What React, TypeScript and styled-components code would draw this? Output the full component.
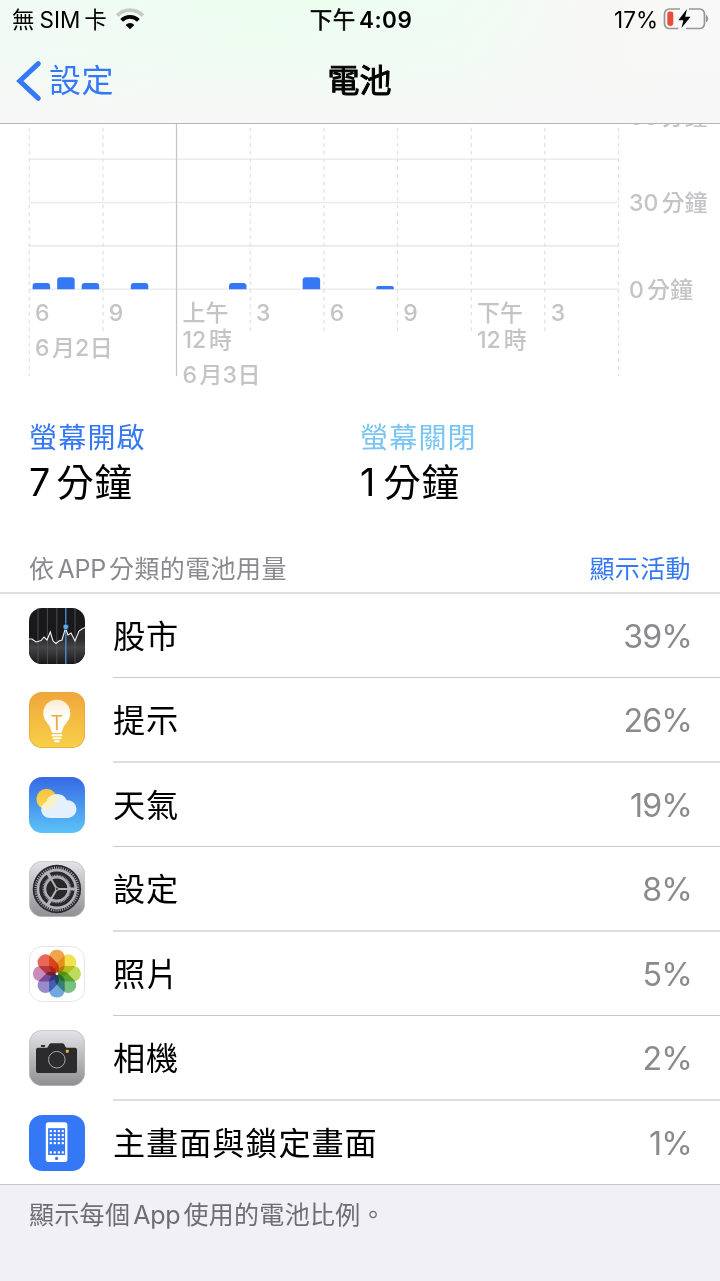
import type { ReactNode } from "react";
import styled, { createGlobalStyle } from "styled-components";

const GlobalStyle = createGlobalStyle`
    * {
        box-sizing: border-box;
    }

    body {
        margin: 0;
        background: #f1f0f6;
        color: #000;
        font-family: Inter, "Noto Sans CJK TC", sans-serif;
        text-autospace: no-autospace;
    }
`;

const Screen = styled.div`
    width: 720px;
    height: 1281px;
    overflow: hidden;
    display: flex;
    flex-direction: column;
`;

const Header = styled.header`
    flex: none;
    height: 124px;
    border-bottom: 1px solid #b4b5b5;
    background: linear-gradient(
            to bottom,
            rgba(247, 247, 247, 0) 0%,
            rgba(247, 247, 247, 0.3) 50%,
            #f7f7f7 100%
        ),
        linear-gradient(to right, #f1fbf4 0%, #edfef0 35%, #effdf2 62%, #f7f8f6 82%, #f8f8f8 100%);
`;

const StatusBar = styled.div`
    display: grid;
    grid-template-columns: 1fr auto 1fr;
    align-items: center;
    height: 40px;
    padding: 0 10px 0 12px;
    font-size: 22.5px;
    line-height: 40px;
`;

const StatusGroup = styled.div<{ $end?: boolean }>`
    display: flex;
    align-items: center;
    justify-content: ${(p) => (p.$end ? "flex-end" : "flex-start")};
    white-space: nowrap;

    svg {
        margin-left: ${(p) => (p.$end ? 0 : 8)}px;
        margin-bottom: 2px;
    }
`;

const Clock = styled.div`
    font-weight: 600;
    letter-spacing: 0.6px;
`;

const ClockPeriod = styled.span`
    font-weight: 400;
    -webkit-text-stroke: 0.5px #000;
`;

const NavBar = styled.nav`
    display: grid;
    grid-template-columns: 1fr auto 1fr;
    align-items: center;
    height: 81px;
    padding: 0 17px 0 16px;
    font-size: 32px;
    line-height: 81px;
`;

const BackLink = styled.a`
    display: flex;
    align-items: center;
    gap: 7px;
    color: #3478f6;
    letter-spacing: 0.4px;
`;

const Title = styled.h1`
    margin: 0;
    font-size: 32px;
    font-weight: 400;
    -webkit-text-stroke: 1px #000;
`;

const Main = styled.main`
    flex: none;
    background: #fff;
`;

const Chart = styled.svg`
    display: block;
    font-size: 23px;
    font-weight: 500;
`;

const Summary = styled.section`
    display: grid;
    grid-template-columns: 331px 1fr;
    padding: 18px 29px 0;
    height: 144px;
`;

const SummaryLabel = styled.div<{ $color: string }>`
    color: ${(p) => p.$color};
    font-size: 28px;
    line-height: 40px;
    letter-spacing: 1.2px;
`;

const SummaryValue = styled.div`
    font-size: 37.5px;
    line-height: 49px;
    letter-spacing: 0.8px;
`;

const ListHeader = styled.div`
    display: flex;
    justify-content: space-between;
    height: 50px;
    padding: 0 29px;
    border-bottom: 2px solid #dedee0;
    color: #8a8a8e;
    font-size: 25px;
    line-height: 50px;
    letter-spacing: 0.4px;
`;

const ActivityLink = styled.a`
    color: #3478f6;
`;

const List = styled.ul`
    margin: 0;
    padding: 0;
    list-style: none;
    border-bottom: 1px solid #c8c7cc;
`;

const RowBody = styled.div`
    flex: 1;
    display: flex;
    justify-content: space-between;
    margin-left: 28px;
    padding-right: 28px;
    font-size: 32.2px;
    line-height: 86px;
    letter-spacing: 0.9px;
    border-bottom: 1px solid #c8c7cc;
`;

const Row = styled.li`
    display: flex;
    height: 84px;
    padding-left: 29px;

    svg {
        flex: none;
        margin-top: 14px;
    }

    &:nth-child(even) {
        height: 85px;

        ${RowBody} {
            border-bottom: 2px solid #dedee0;
        }
    }

    &:last-child {
        height: 83px;

        ${RowBody} {
            border-bottom: none;
        }
    }
`;

const Percent = styled.span`
    color: #8a8a8e;
    letter-spacing: -0.9px;
`;

const Footnote = styled.p`
    margin: 0;
    padding: 0 29px;
    color: #6d6d72;
    font-size: 25px;
    line-height: 60px;
    letter-spacing: 0.3px;
`;

const Latin = styled.span<{ $left?: number; $right?: number; $tracking?: number }>`
    margin-left: ${(p) => p.$left ?? 0}px;
    margin-right: ${(p) => p.$right ?? 0}px;
    letter-spacing: ${(p) => p.$tracking ?? 0}px;
`;

const WifiIcon = () => (
    <svg width="30" height="22" viewBox="0 0 30 22" fill="none">
        <path d="M2.1 7.6A18 18 0 0 1 27.9 7.6" stroke="#c3cbc5" strokeWidth="3.8" />
        <path d="M6.6 12.3A11.9 11.9 0 0 1 23.4 12.3" stroke="#000" strokeWidth="3.9" />
        <path d="M15 21.2L10.7 16.9A6 6 0 0 1 19.3 16.9Z" fill="#000" />
    </svg>
);

const BatteryIcon = () => (
    <svg width="48" height="26" viewBox="0 0 48 26" fill="none">
        <path
            d="M18 3H7.5A5 5 0 0 0 2.5 8V17.5A5 5 0 0 0 7.5 22.5H16.5M27 3H37.5A5 5 0 0 1 42.5 8V17.5A5 5 0 0 1 37.5 22.5H24"
            stroke="#969696"
            strokeWidth="1.7"
        />
        <path d="M44.5 9.5Q47 12.5 44.5 16Z" fill="#969696" stroke="#969696" />
        <rect x="5.3" y="5.6" width="6" height="14.4" rx="2.4" fill="#eb4d3d" />
        <path d="M25 3L16.3 14.3H21.4L19.5 22L28.6 10.8H23.2Z" fill="#000" />
    </svg>
);

const BackIcon = () => (
    <svg width="26" height="42" viewBox="0 0 26 42" fill="none">
        <path
            d="M22.3 3.6L3.8 21L22.3 38.4"
            stroke="#3478f6"
            strokeWidth="5"
            strokeLinecap="round"
            strokeLinejoin="miter"
        />
    </svg>
);

const StocksIcon = () => (
    <svg width="56" height="56" viewBox="0 0 56 56">
        <defs>
            <linearGradient id="stocks" x2="0" y2="1">
                <stop offset="0.3" stopColor="#2c2c2e" />
                <stop offset="0.55" stopColor="#454547" />
                <stop offset="1" stopColor="#19191b" />
            </linearGradient>
        </defs>
        <rect width="56" height="56" rx="13" fill="#19191b" />
        <path
            d="M0 31L3 31L7 34L12 32.5L15 29L18 32L21.3 24L24 33L27 35.5L30 33L33 32L36.5 20L39 27L42 25L46 33L50 23L53 21L56 19.5V43A13 13 0 0 1 43 56H13A13 13 0 0 1 0 43Z"
            fill="url(#stocks)"
        />
        <path d="M9 0V56M18.4 0V56M27.8 0V56M46 0V56" stroke="#59595b" strokeWidth="0.8" />
        <path d="M36.8 0V56" stroke="#4795dd" strokeWidth="1.3" />
        <path
            d="M0 31L3 31L7 34L12 32.5L15 29L18 32L21.3 24L24 33L27 35.5L30 33L33 32L36.5 20L39 27L42 25L46 33L50 23L53 21L56 19.5"
            fill="none"
            stroke="#f2f2f2"
            strokeWidth="1.1"
        />
        <circle cx="36.8" cy="18.8" r="2.8" fill="#55acf2" stroke="#19191b" strokeWidth="0.6" />
    </svg>
);

const TipsIcon = () => (
    <svg width="56" height="56" viewBox="0 0 56 56">
        <defs>
            <linearGradient id="tips" x2="0" y2="1">
                <stop stopColor="#f0a63b" />
                <stop offset="1" stopColor="#f7d048" />
            </linearGradient>
            <linearGradient id="bulb" x2="0" y2="1">
                <stop stopColor="#fbebd0" />
                <stop offset="0.5" stopColor="#fff" />
            </linearGradient>
        </defs>
        <rect width="56" height="56" rx="13" fill="#e5a63c" />
        <rect x="0.7" y="0.7" width="54.6" height="54.6" rx="12.4" fill="url(#tips)" />
        <path
            d="M27.8 7.8C20 7.8 14.3 13.6 14.3 21C14.3 26.6 17.3 29.7 20 33.3C22.4 36.5 21.6 41 24.5 41H31C34 41 33.2 36.5 35.6 33.3C38.3 29.7 41.3 26.6 41.3 21C41.3 13.6 35.6 7.8 27.8 7.8Z"
            fill="url(#bulb)"
        />
        <path
            d="M23.4 43.2H32.4M24.3 46.3H31.5M26 49.2H29.8"
            stroke="#fff"
            strokeWidth="1.9"
            strokeLinecap="round"
        />
        <text x="27.8" y="38" textAnchor="middle" fontSize="19.5" fill="#efa93d">
            T
        </text>
    </svg>
);

const WeatherIcon = () => (
    <svg width="56" height="56" viewBox="0 0 56 56">
        <defs>
            <linearGradient id="sky" x2="0" y2="1">
                <stop stopColor="#3669e4" />
                <stop offset="1" stopColor="#5cc3f8" />
            </linearGradient>
            <linearGradient id="sun" x2="0" y2="1">
                <stop stopColor="#f5c043" />
                <stop offset="1" stopColor="#fae04f" />
            </linearGradient>
            <clipPath id="cloud">
                <path d="M20.5 41A8.3 8.3 0 0 1 17.4 25A11 11 0 0 1 37.8 23.2A8.9 8.9 0 1 1 39.3 41Z" />
            </clipPath>
        </defs>
        <rect width="56" height="56" rx="13" fill="url(#sky)" />
        <circle cx="17.6" cy="22" r="10.2" fill="url(#sun)" />
        <g clipPath="url(#cloud)">
            <rect width="56" height="56" fill="#e4f1fc" />
            <circle cx="17.6" cy="22" r="10.2" fill="#fbf2c4" />
        </g>
    </svg>
);

const SettingsIcon = () => (
    <svg width="56" height="56" viewBox="0 0 56 56" fill="none">
        <defs>
            <linearGradient id="metal" x2="0" y2="1">
                <stop stopColor="#e3e3e8" />
                <stop offset="1" stopColor="#8e8e93" />
            </linearGradient>
        </defs>
        <rect x="0.3" y="0.3" width="55.4" height="55.4" rx="12.8" fill="url(#metal)" stroke="#bdbdc1" strokeWidth="0.7" />
        <circle cx="27.9" cy="28" r="24.2" fill="#29292b" />
        <circle cx="27.9" cy="28" r="21.3" stroke="#a9a9ad" strokeWidth="2.4" strokeDasharray="1 1.25" />
        <circle cx="27.9" cy="28" r="18.9" stroke="#b4b4b8" strokeWidth="2.6" />
        <circle cx="27.9" cy="28" r="13.6" stroke="#9c9ca0" strokeWidth="1.6" strokeDasharray="0.8 0.8" />
        <circle cx="27.9" cy="28" r="11.9" stroke="#adadb1" strokeWidth="2.6" />
        <path d="M27.9 28H46.5M27.9 28L18.6 11.9M27.9 28L18.6 44.1" stroke="#b2b2b6" strokeWidth="2" />
        <path d="M39 28H46.8M22.4 18.4L18.5 11.7M22.4 37.6L18.5 44.3" stroke="#b2b2b6" strokeWidth="3.2" />
        <circle cx="27.9" cy="28" r="2" fill="#a7a7ab" />
        <circle cx="27.9" cy="28" r="0.9" fill="#29292b" />
    </svg>
);

const petals = ["#f09a37", "#f0dd3c", "#b9d64b", "#68ba74", "#629fdc", "#8d7dc6", "#c580b4", "#e65744"];

const Petal = styled.rect`
    mix-blend-mode: multiply;
`;

const PhotosIcon = () => (
    <svg width="56" height="56" viewBox="0 0 56 56">
        <rect x="0.5" y="0.5" width="55" height="55" rx="12.7" fill="#fff" stroke="#e6e6e6" />
        {petals.map((color, i) => (
            <Petal
                key={color}
                x="20.1"
                y="3.8"
                width="15.6"
                height="23.4"
                rx="7.3"
                fill={color}
                opacity="0.9"
                transform={`rotate(${i * 45} 27.9 27.7)`}
            />
        ))}
        <circle cx="27.9" cy="27.7" r="1.3" fill="#fff" />
    </svg>
);

const CameraIcon = () => (
    <svg width="56" height="56" viewBox="0 0 56 56">
        <rect x="0.3" y="0.3" width="55.4" height="55.4" rx="12.8" fill="url(#metal)" stroke="#b5b5b9" strokeWidth="0.7" />
        <rect x="11.8" y="15" width="4.4" height="1.9" rx="0.8" fill="#2b2b2d" />
        <path
            d="M9 17.7H17.7C19.7 17.7 19.5 13.2 22 13.2H33.5C36 13.2 35.8 17.7 37.8 17.7H46A2 2 0 0 1 48 19.7V41A2 2 0 0 1 46 43H9A2 2 0 0 1 7 41V19.7A2 2 0 0 1 9 17.7Z"
            fill="#2b2b2d"
        />
        <circle cx="27.8" cy="29.7" r="8.3" fill="none" stroke="#a7a7a9" strokeWidth="1" />
        <rect x="36.8" y="19.8" width="2.9" height="2.9" rx="0.7" fill="#f2b93b" />
    </svg>
);

const HomeScreenIcon = () => (
    <svg width="56" height="56" viewBox="0 0 56 56">
        <rect width="56" height="56" rx="13" fill="#3478f6" />
        <rect x="16.8" y="7.3" width="21.6" height="39.8" rx="2.8" fill="#fff" />
        <rect x="19.1" y="13.2" width="17" height="26.8" fill="#3478f6" />
        {[15, 19, 23, 27, 36.3].map((y) =>
            [20.8, 24.8, 28.8, 32.8].map((x) => (
                <rect key={`${x}-${y}`} x={x - 0.1} y={y} width="2.2" height="2.2" fill="#fff" />
            ))
        )}
        <circle cx="27.6" cy="43.4" r="1.6" fill="#3478f6" />
    </svg>
);

const apps: { name: string; percent: number; icon: ReactNode }[] = [
    { name: "股市", percent: 39, icon: <StocksIcon /> },
    { name: "提示", percent: 26, icon: <TipsIcon /> },
    { name: "天氣", percent: 19, icon: <WeatherIcon /> },
    { name: "設定", percent: 8, icon: <SettingsIcon /> },
    { name: "照片", percent: 5, icon: <PhotosIcon /> },
    { name: "相機", percent: 2, icon: <CameraIcon /> },
    { name: "主畫面與鎖定畫面", percent: 1, icon: <HomeScreenIcon /> },
];

// Chart geometry: one dashed line every three hours, one slot per hour
const LEFT = 29.3;
const STEP = 73.65;
const BASE = 165.3;

const bars = [
    { hour: 0, height: 6.3 },
    { hour: 1, height: 12 },
    { hour: 2, height: 6.3 },
    { hour: 4, height: 6.3 },
    { hour: 8, height: 6.3 },
    { hour: 11, height: 12 },
    { hour: 14, height: 3.3 },
];

const hours = ["6", "9", "上午", "3", "6", "9", "下午", "3"];

const dates = [
    { month: "6", day: "2", x: 35, y: 232 },
    { month: "6", day: "3", x: 182.5, y: 259 },
];

const barPath = (hour: number, height: number) => {
    const x = LEFT + 3.3 + (hour * STEP) / 3;
    const r = Math.min(3, height / 2);
    return `M${x} ${BASE}v${r - height}q0 ${-r} ${r} ${-r}h${17.5 - 2 * r}q${r} 0 ${r} ${r}v${height - r}z`;
};

const UsageChart = () => (
    <Chart width="720" height="276" viewBox="0 0 720 276">
        {[35.3, 78.5, 121.9, BASE].map((y) => (
            <path key={y} d={`M${LEFT} ${y}H618.5`} stroke="#ebebeb" strokeWidth="1.6" />
        ))}
        {Array.from({ length: 9 }, (_, i) => (
            <path
                key={i}
                d={`M${LEFT + i * STEP} -4V${i === 0 || i === 8 ? 252 : 209}`}
                stroke="#e0e0e0"
                strokeWidth="1.2"
                strokeDasharray="3.84 3.84"
            />
        ))}
        <path d="M176.5 0V252" stroke="#c4c4c4" strokeWidth="1.2" />
        {bars.map(({ hour, height }) => (
            <path key={hour} d={barPath(hour, height)} fill="#3478f6" />
        ))}
        <g fill="#c4c4c6">
            {hours.map((label, i) => (
                <text key={i} x={LEFT + 5.8 + i * STEP} y={197}>
                    {label}
                </text>
            ))}
            {[2, 6].map((i) => (
                <text key={i} x={LEFT + 5.8 + i * STEP} y={224}>
                    12<tspan dx="3">時</tspan>
                </text>
            ))}
            {dates.map(({ month, day, x, y }) => (
                <text key={y} x={x} y={y}>
                    {month}
                    <tspan dx="2.5">月</tspan>
                    <tspan dx="0">{day}</tspan>
                    <tspan dx="0.5">日</tspan>
                </text>
            ))}
            {["60", "30", "0"].map((n, i) => (
                <text key={n} x="629" y={0.8 + i * 86.6}>
                    {n}
                    <tspan dx="3.2">分鐘</tspan>
                </text>
            ))}
        </g>
    </Chart>
);

const App = () => {
    return (
        <>
            <GlobalStyle />
            <Screen>
                <Header>
                    <StatusBar>
                        <StatusGroup>
                            無
                            <Latin $left={5} $right={4}>
                                SIM
                            </Latin>
                            卡
                            <WifiIcon />
                        </StatusGroup>
                        <Clock>
                            <ClockPeriod>下午</ClockPeriod>
                            <Latin $left={3} $tracking={0.5}>
                                4:09
                            </Latin>
                        </Clock>
                        <StatusGroup $end>
                            <Latin $right={4}>17%</Latin>
                            <BatteryIcon />
                        </StatusGroup>
                    </StatusBar>
                    <NavBar>
                        <BackLink>
                            <BackIcon />
                            設定
                        </BackLink>
                        <Title>電池</Title>
                    </NavBar>
                </Header>
                <Main>
                    <UsageChart />
                    <Summary>
                        <div>
                            <SummaryLabel $color="#3478f6">螢幕開啟</SummaryLabel>
                            <SummaryValue>
                                <Latin $right={6}>7</Latin>分鐘
                            </SummaryValue>
                        </div>
                        <div>
                            <SummaryLabel $color="#78c5f5">螢幕關閉</SummaryLabel>
                            <SummaryValue>
                                <Latin $right={8}>1</Latin>分鐘
                            </SummaryValue>
                        </div>
                    </Summary>
                    <ListHeader>
                        <span>
                            依
                            <Latin $left={3} $right={3} $tracking={-0.2}>
                                APP
                            </Latin>
                            分類的電池用量
                        </span>
                        <ActivityLink>顯示活動</ActivityLink>
                    </ListHeader>
                    <List>
                        {apps.map(({ name, percent, icon }) => (
                            <Row key={name}>
                                {icon}
                                <RowBody>
                                    <span>{name}</span>
                                    <Percent>{percent}%</Percent>
                                </RowBody>
                            </Row>
                        ))}
                    </List>
                </Main>
                <Footnote>
                    顯示每個
                    <Latin $left={3} $right={3} $tracking={-0.2}>
                        App
                    </Latin>
                    使用的電池比例。
                </Footnote>
            </Screen>
        </>
    );
};

export default App;
